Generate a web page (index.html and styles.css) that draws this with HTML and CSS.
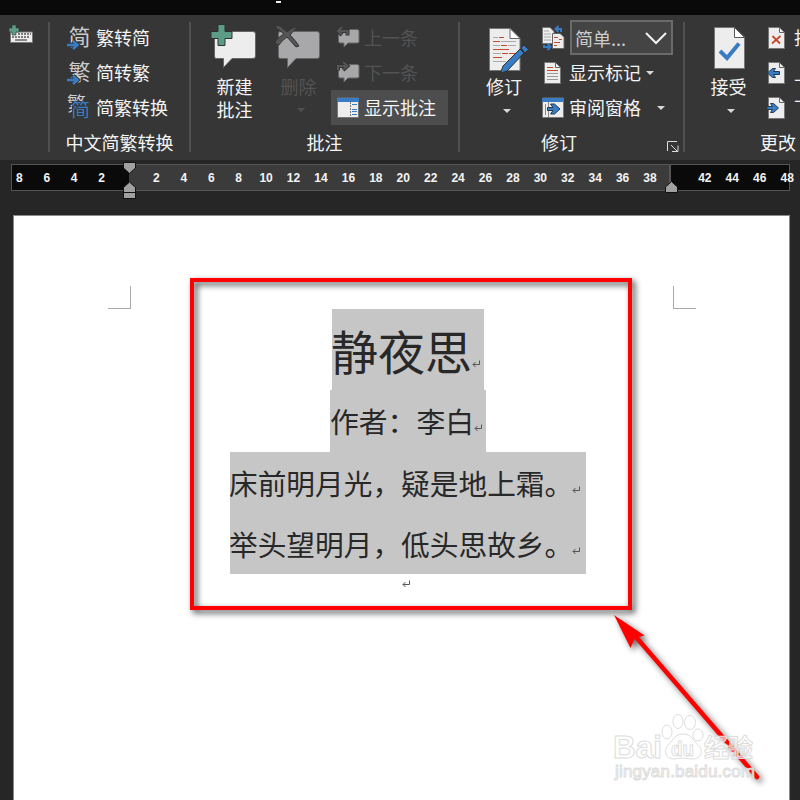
FILE: index.html
```
<!DOCTYPE html>
<html lang="zh-CN">
<head>
  <meta charset="UTF-8">
  <title>静夜思</title>
  <link rel="stylesheet" href="styles.css">
</head>
<body>
  <svg class="defs" width="0" height="0">
    <symbol id="enter" viewBox="0 0 8 8"><path d="M7.5 0.5V4.5H1M3.5 2L1 4.5L3.5 7" fill="none" stroke="#555"/></symbol>
    <symbol id="file" viewBox="0 0 20 22"><path d="M1.5 0.5H12.5L17.5 5.5V21.5H1.5Z" fill="#ededed" stroke="#777"/><path d="M12.5 .5V5.5H17.5" fill="none" stroke="#666"/></symbol>
  </svg>

  <div class="titlebar"><span class="dash"></span></div>

  <div class="ribbon">
    <div class="group g-input">
      <svg class="keyboard" width="26" height="20" viewBox="0 0 26 20">
        <path d="M1.500 7H23.500V17.500H1.500Z" fill="#ededed" stroke="#777"/>
        <path d="M9 9H22M3 12H20" stroke="#555" stroke-width="1.500" stroke-dasharray="2 1"/>
        <path d="M6 15H18" stroke="#666" stroke-width="1.500"/>
        <path d="M3 0H7V3H10V7H7V10H3V7H0V3H3Z" fill="#5c9b86" stroke="#363636" stroke-width=".6"/>
      </svg>
    </div>
    <div class="sep"></div>

    <div class="group g-convert">
      <div class="rows">
        <div class="row">
          <svg width="24" height="26" viewBox="0 0 24 26"><text class="icon-char" x="1.500" y="20">简</text><path class="blue-outline" d="M0 20H10M6 16L10.500 20L6 24"/><path class="blue-arrow" d="M0 20H10M6 16L10.500 20L6 24"/></svg>
          <span>繁转简</span>
        </div>
        <div class="row">
          <svg width="24" height="26" viewBox="0 0 24 26"><text class="icon-char" x="1.500" y="20">繁</text><path class="blue-outline" d="M0 20H10M6 16L10.500 20L6 24"/><path class="blue-arrow" d="M0 20H10M6 16L10.500 20L6 24"/></svg>
          <span>简转繁</span>
        </div>
        <div class="row">
          <svg width="24" height="26" viewBox="0 0 24 26"><text class="icon-char small" x="0" y="16">繁</text><path d="M5 6H24V26H5Z" fill="#363636"/><text class="icon-char blue" x="4" y="21.500">简</text></svg>
          <span>简繁转换</span>
        </div>
      </div>
      <div class="label">中文简繁转换</div>
    </div>
    <div class="sep"></div>

    <div class="group g-comment">
      <div class="tools">
        <div class="big">
          <svg width="48" height="46" viewBox="0 0 48 46">
            <path d="M6 7.500H43Q45.500 7.500 45.500 10V32Q45.500 34.500 43 34.500H22L13.500 43.500V34.500H6Q4.500 34.500 4.500 32V10Q4.500 7.500 6 7.500Z" fill="#ededed" stroke="#666"/>
            <path d="M8 .5H15V7.500H22V14.500H15V21.500H8V14.500H1V7.500H8Z" fill="#5c9b86" stroke="#303030"/>
          </svg>
          <span>新建<br>批注</span>
        </div>
        <div class="big disabled delete">
          <svg width="48" height="46" viewBox="0 0 48 46">
            <path d="M6 7.500H43Q45.500 7.500 45.500 10V32Q45.500 34.500 43 34.500H22L13.500 43.500V34.500H6Q4.500 34.500 4.500 32V10Q4.500 7.500 6 7.500Z" fill="#a8a8aa" stroke="#666"/>
            <path d="M1 3Q3 0 6 2L13 8Q18 3 23 3V4Q19 7 16 11Q22 17 25 22L22 23L13 13Q7 17 5 21Q2 21 1 18Q4 13 10 10Z" fill="#555" stroke="#333"/>
          </svg>
          <span>删除</span>
          <i class="caret"></i>
        </div>
        <div class="rows">
          <div class="row disabled">
            <svg width="23" height="24" viewBox="0 0 23 24"><path d="M3 3.500H20Q22 3.500 22 5V16Q22 17 20 17H11L7 21V17H3Q1.500 17 1.500 15V5Q1.500 3.500 3 3.500Z" fill="#a8a8aa" stroke="#666"/><path d="M10.500 9.500V5H1M5 .5L1 5L5 9" fill="none" stroke="#343434" stroke-width="4"/><path d="M10.500 9V5H1M5 1L1 5L5 8.500" fill="none" stroke="#555" stroke-width="2"/></svg>
            <span>上一条</span>
          </div>
          <div class="row disabled">
            <svg width="23" height="24" viewBox="0 0 23 24"><path d="M3 3.500H20Q22 3.500 22 5V16Q22 17 20 17H11L7 21V17H3Q1.500 17 1.500 15V5Q1.500 3.500 3 3.500Z" fill="#a8a8aa" stroke="#666"/><path d="M1 9.500V5H10M6 .5L10.500 5L6 9" fill="none" stroke="#343434" stroke-width="4"/><path d="M1 9V5H10M6 1L10.500 5L6 8.500" fill="none" stroke="#555" stroke-width="2"/></svg>
            <span>下一条</span>
          </div>
          <div class="row active">
            <svg width="23" height="22" viewBox="0 0 23 22"><path d="M.5 1H21.500V20.500H.5Z" fill="#ededed" stroke="#777"/><path d="M0 1H22V5H0Z" fill="#387cc3"/><path d="M13.500 5V20" stroke="#777" stroke-dasharray="2 1"/><path d="M15 7.500H20M15 12.500H20M15 14.500H20M15 17.500H20" stroke="#387cc3"/></svg>
            <span>显示批注</span>
          </div>
        </div>
      </div>
      <div class="label">批注</div>
    </div>
    <div class="sep"></div>

    <div class="group g-track">
      <div class="tools">
        <div class="big">
          <svg width="40" height="46" viewBox="0 0 40 46">
            <path d="M1.500 .5H22L32 10V42.500H1.500Z" fill="#ededed" stroke="#777"/>
            <path d="M22 .5V10.500H32Z" fill="#fff" stroke="#666"/>
            <path d="M5 9.500H10M5 17.500H12M5 25.500H13M5 33.500H18M13 13.500H28M20 17.500H28" stroke="#aaa"/>
            <path d="M11 9.500H16M5 13.500H12M13 17.500H19M5 21.500H21M14 25.500H20M5 29.500H14M21 25.500H28" stroke="#c7472a"/>
            <path d="M12.500 45L15 38L32 21L36 25L19 43Z" fill="#387cc3" stroke="#303030"/><path d="M33 20L36 17L40.500 21.500L37 25Z" fill="#387cc3" stroke="#303030"/>
          </svg>
          <span>修订</span>
          <i class="caret"></i>
        </div>
        <div class="rows">
          <div class="row">
            <svg width="23" height="26" viewBox="0 0 23 26"><path d="M.5 2.500H8L12 6.500V18.500H.5Z" fill="#ededed" stroke="#777"/><path d="M2 6H7M2 9H9M2 12H9M2 15H9" stroke="#aaa"/><path d="M10.500 8.500H18L22 12V23.500H10.500Z" fill="#ededed" stroke="#666"/><path d="M12 12.500H16M17 14.500H20M12 17.500H18M12 20.500H15" stroke="#c7472a"/><path d="M14 4H19V7M16.500 1L13.500 4L16.500 7M2 20V22H8M5.500 18.500L8.500 22L5.500 25" fill="none" stroke="#387cc3" stroke-width="2"/></svg>
            <div class="select"><span>简单...</span><svg width="22" height="14" viewBox="0 0 22 14"><path d="M1 2L11 12L21 2" fill="none" stroke="#f2f2f2" stroke-width="2"/></svg></div>
          </div>
          <div class="row">
            <svg width="23" height="22" viewBox="0 0 23 22"><use href="#file" x="1" width="20" height="22"/><path d="M5 5.500H11M5 8.500H16" stroke="#c7472a"/><path d="M5 11.500H16M5 14.500H16M5 17.500H16" stroke="#999"/></svg>
            <span>显示标记</span><i class="caret"></i>
          </div>
          <div class="row">
            <svg width="23" height="22" viewBox="0 0 23 22"><path d="M.5 1H21.500V20.500H.5Z" fill="#ededed" stroke="#777"/><path d="M0 1H22V5H0Z" fill="#387cc3"/><path d="M3.500 7V18M6.500 5V20" stroke="#888"/><path d="M5.500 10.500H11L8.500 7H12.500L18 12L12.500 17H8.500L11 13.500H5.500Z" fill="#387cc3" stroke="#263b51"/></svg>
            <span>审阅窗格</span><i class="caret far"></i>
          </div>
        </div>
      </div>
      <div class="label">修订</div>
      <svg class="launcher" width="12" height="12" viewBox="0 0 12 12"><path d="M.5 10V.5H10M4 4L10 10M11 4.500V10.500H5" fill="none" stroke="#ddd"/></svg>
    </div>
    <div class="sep"></div>

    <div class="group g-change">
      <div class="tools">
        <div class="big">
          <svg width="32" height="46" viewBox="0 0 32 46"><path d="M.5 .5H20.500L30.500 10V41.500H.5Z" fill="#ededed" stroke="#777"/><path d="M20.500 .5V10.500H30.500Z" fill="#fff" stroke="#555"/><path d="M6 24L13 31L25 16.500" fill="none" stroke="#387cc3" stroke-width="4"/></svg>
          <span>接受</span>
          <i class="caret"></i>
        </div>
        <div class="rows">
          <div class="row"><svg width="20" height="22" viewBox="0 0 20 22"><use href="#file" width="20" height="22"/><path d="M5.500 9L13 16.500M13.500 9L5 16.500" stroke="#c7472a" stroke-width="1.800"/></svg><span>拒绝</span></div>
          <div class="row"><svg width="20" height="22" viewBox="0 0 20 22"><use href="#file" width="20" height="22"/><path d="M.5 11L5.500 6.500H8.500L6.500 9.500H12.500V12.500H6.500L8.500 15.500H5.500Z" fill="#387cc3" stroke="#263b51"/></svg><span>上一条</span></div>
          <div class="row"><svg width="20" height="22" viewBox="0 0 20 22"><use href="#file" width="20" height="22"/><path d="M11.500 11L6.500 6.500H3.500L5.500 9.500H0V12.500H5.500L3.500 15.500H6.500Z" fill="#387cc3" stroke="#263b51"/></svg><span>下一条</span></div>
        </div>
      </div>
      <div class="label">更改</div>
    </div>
  </div>

  <div class="ruler">
    <div class="numbers">
      <b>8</b><b>6</b><b>4</b><b>2</b><b></b><b>2</b><b>4</b><b>6</b><b>8</b><b>10</b><b>12</b><b>14</b><b>16</b><b>18</b><b>20</b><b>22</b><b>24</b><b>26</b><b>28</b><b>30</b><b>32</b><b>34</b><b>36</b><b>38</b><b></b><b>42</b><b>44</b><b>46</b><b>48</b>
    </div>
    <svg class="marker left" width="13" height="37" viewBox="0 0 13 37"><path d="M.5 .5H12.500V6L6.500 11.500L.5 6ZM.5 36.500V25.500L6.500 20L12.500 25.500V36.500Z" fill="#a0a0a0" stroke="#111"/><path d="M0 30.500H13" stroke="#111"/></svg>
    <svg class="marker right" width="13" height="12" viewBox="0 0 13 12"><path d="M.5 11.500V6L6.500 .5L12.500 6V11.500Z" fill="#a0a0a0" stroke="#111"/></svg>
  </div>

  <div class="page">
    <div class="crop-marks"><span class="mark-left"></span><span class="mark-right"></span></div>
    <div class="poem">
      <div class="poem-title">静夜思<svg class="enter"><use href="#enter"/></svg></div>
      <div class="author">作者：李白<svg class="enter"><use href="#enter"/></svg></div>
      <div class="verse">床前明月光，疑是地上霜。<svg class="enter"><use href="#enter"/></svg></div>
      <div class="verse">举头望明月，低头思故乡。<svg class="enter"><use href="#enter"/></svg></div>
      <div class="empty"><svg class="enter"><use href="#enter"/></svg></div>
    </div>
  </div>

  <div class="frame"></div>
  <svg class="overlay" width="800" height="800" viewBox="0 0 800 800">
    <g class="arrow"><path d="M636 637L757 777" stroke="#f00" stroke-width="4.500" stroke-linecap="round"/><path d="M614 615L644.500 635.500L635 638L630.500 648Z" fill="#f00"/></g>
    <g class="watermark">
      <text x="613" y="758" font-size="31" textLength="49" lengthAdjust="spacingAndGlyphs">Bai</text>
      <path d="M683 734C675 734 673 740 669 744C663 750 665 759 674 759Q683 757 692 759C702 759 704 750 698 745C693 741 692 734 683 734Z"/>
      <ellipse cx="667" cy="732" rx="5" ry="7"/><ellipse cx="678" cy="721.500" rx="5" ry="7"/><ellipse cx="690" cy="722.500" rx="5.500" ry="7"/><ellipse cx="698" cy="735" rx="5" ry="6"/>
      <text x="671" y="756" font-size="21" textLength="23" lengthAdjust="spacingAndGlyphs">du</text>
      <text class="cn" x="704" y="756.500" font-size="25" textLength="49">经验</text>
      <text x="615" y="777" font-size="17" textLength="140" class="url">jingyan.baidu.com</text>
    </g>
  </svg>
</body>
</html>
```
FILE: styles.css
```
* { box-sizing: border-box; }

body {
  margin: 0;
  width: 800px;
  height: 800px;
  overflow: hidden;
  position: relative;
  background: #262626;
  color: #f4f4f4;
  font-family: "Noto Sans CJK SC", sans-serif;
  font-size: 18px;
}

svg { display: block; flex: none; overflow: visible; }
.defs { position: absolute; }

.titlebar {
  height: 15px;
  background: #090909;
  padding: 1px 0 0 276px;
}

.dash {
  display: block;
  width: 5px;
  height: 2px;
  background: #eee;
}

/* ribbon */
.ribbon {
  width: 800px;
  height: 145px;
  display: flex;
  padding-top: 5px;
  overflow: hidden;
  background: #363636;
  white-space: nowrap;
}

.sep {
  width: 2px;
  height: 130px;
  margin-top: 2px;
  flex: none;
  background: #505050;
}

.group { flex: none; position: relative; }
.g-input { width: 48px; padding: 5px 0 0 9px; }
.g-convert { width: 139px; }
.g-comment { width: 267px; }
.g-track { width: 223px; }
.g-change { width: 115px; }

.tools { display: flex; height: 105px; }
.rows { height: 105px; }

.row {
  display: flex;
  align-items: center;
  height: 35px;
  gap: 5px;
  line-height: 34px;
}

.row > span { height: 35px; }
.g-convert .row { padding-left: 17px; }
.g-comment .rows { margin-left: 8px; }
.g-comment .row { width: 117px; padding-left: 6px; gap: 4px; }
.g-track .rows { margin-left: 13px; }
.g-track .row > span { margin-left: -1px; }
.g-change .rows { margin-left: 21px; }
.g-change .row { gap: 7px; }

.label {
  height: 35px;
  line-height: 35px;
  text-align: center;
}

.g-track .label { padding-right: 25px; }
.g-change .label { text-align: left; padding-left: 75px; }

.big {
  display: flex;
  flex-direction: column;
  align-items: center;
  width: 48px;
  margin-left: 20px;
  padding-top: 4px;
  line-height: 23px;
}

.big svg { margin-left: -2px; }
.big span { margin: 5px 1px 0 0; }
.big .caret { margin: 10px 0 0 3px; }
.delete { margin-left: 16px; }
.g-track .big { width: 40px; margin-left: 29px; padding-top: 8px; }
.g-track .big span { margin: 1px 10px 0 0; }
.g-track .big .caret { margin: 11px 5px 0 0; }
.g-change .big { width: 32px; margin-left: 29px; padding-top: 7px; }
.g-change .big svg { margin-left: 0; }
.g-change .big span { margin: 2px 3px 0 0; }
.g-change .big .caret { margin: 11px 0 0 2px; }

.disabled { color: #535353; }
.active { background: #4d4d4d; }

.caret {
  width: 0;
  height: 0;
  border: 4px solid transparent;
  border-top-color: #d8d8d8;
  border-bottom: 0;
}

.disabled .caret { border-top-color: #505050; }
.far { margin-left: 11px; }

.select {
  display: flex;
  align-items: center;
  justify-content: space-between;
  width: 103px;
  height: 35px;
  padding: 0 4px 0 3px;
  border: 2px solid #6a6a6a;
  background: #444;
  color: #ccc;
  line-height: 30px;
}

.launcher { position: absolute; left: 207px; top: 121px; }

.icon-char { font-size: 22px; fill: #ccc; }
.icon-char.small { font-size: 19px; }
.icon-char.blue { font-size: 19px; fill: #387cc3; }
.blue-arrow { fill: none; stroke: #387cc3; stroke-width: 2.5; }
.blue-outline { fill: none; stroke: #363636; stroke-width: 4.5; }

/* ruler */
.ruler {
  position: relative;
  width: 779px;
  height: 27px;
  margin: 4px 0 0 11px;
  border: 1px solid #555;
  background: linear-gradient(90deg, #0a0a0a 117px, #3b3b3b 117px, #3b3b3b 657px, #555 657px, #555 659px, #0a0a0a 659px);
}

.numbers {
  display: flex;
  margin-left: -6.4px;
  font: bold 12px/26px "Liberation Sans", sans-serif;
}

.numbers b { flex: 0 0 27.43px; text-align: center; }

.marker { position: absolute; }
.marker.left { left: 111px; top: -3px; }
.marker.right { left: 653px; top: 16px; }

/* document */
.page {
  width: 777px;
  height: 620px;
  margin: 24px 0 0 13px;
  padding-top: 70px;
  border: 1px solid #8b8b8b;
  background: #fff;
  color: #282828;
}

.crop-marks {
  display: flex;
  justify-content: space-between;
  width: 588px;
  margin-left: 94px;
}

.crop-marks span {
  width: 23px;
  height: 23px;
  border-bottom: 1px solid #aaa;
}

.mark-left { border-right: 1px solid #aaa; }
.mark-right { border-left: 1px solid #aaa; }

.poem {
  display: flex;
  flex-direction: column;
  align-items: center;
  padding-left: 13px;
}

.poem > div {
  display: flex;
  align-items: center;
  background: #c6c6c6;
  white-space: nowrap;
}

.poem .enter { width: 8px; height: 8px; margin-top: 10px; }
.poem-title { width: 152px; height: 81px; font-size: 47px; line-height: 78px; text-indent: -1px; }
.poem .poem-title .enter { margin-top: 28px; }
.author { width: 156px; height: 62px; font-size: 28.8px; line-height: 62px; }
.poem .author .enter { margin-top: 13px; }
.verse { width: 356px; height: 61px; font-size: 28.7px; line-height: 60px; text-indent: -1px; }
.poem .verse .enter { margin: 14px 0 0 -1px; }
.poem > .empty { background: none; height: 20px; margin-right: 5px; }
.poem .empty .enter { margin: 0; }

/* annotations */
.frame {
  position: absolute;
  left: 190px;
  top: 278px;
  width: 442px;
  height: 332px;
  border: 4px solid #f00;
  filter: drop-shadow(3px 3px 3px rgba(0, 0, 0, 0.75));
}

.overlay { position: absolute; left: 0; top: 0; }
.arrow { filter: drop-shadow(3px 3px 3px rgba(0, 0, 0, 0.6)); }

.watermark {
  fill: #fff;
  fill-opacity: 0.6;
  stroke: #ddd;
  stroke-width: 1;
  font-family: "Liberation Sans", sans-serif;
  font-weight: bold;
}

.watermark .cn { font-family: "Noto Sans CJK SC", sans-serif; }
.watermark .url { font-weight: normal; }
```
